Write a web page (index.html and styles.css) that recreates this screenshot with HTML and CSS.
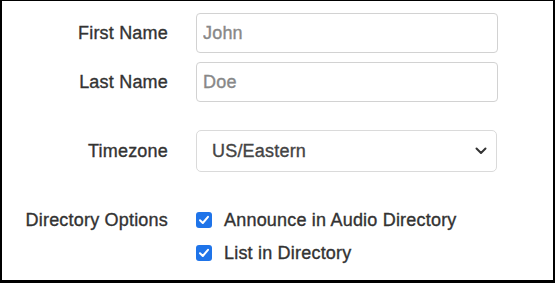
FILE: index.html
```html
<!DOCTYPE html>
<html lang="en">
<head>
    <meta charset="UTF-8">
    <meta name="viewport" content="width=device-width, initial-scale=1.0">
    <title>Profile</title>
    <link rel="stylesheet" href="styles.css">
</head>
<body>
    <form class="panel">
        <div class="row">
            <label class="label" for="first">First Name</label>
            <input class="field" id="first" type="text" placeholder="John">
        </div>
        <div class="row">
            <label class="label" for="last">Last Name</label>
            <input class="field" id="last" type="text" placeholder="Doe">
        </div>
        <div class="row row-tz">
            <span class="label">Timezone</span>
            <div class="select">
                <span>US/Eastern</span>
                <svg width="12" height="8" viewBox="0 0 12 8"><path d="M1.5 1.5 L6 6 L10.5 1.5" fill="none" stroke="#333" stroke-width="2" stroke-linecap="round" stroke-linejoin="round"/></svg>
            </div>
        </div>
        <div class="row row-dir">
            <span class="label">Directory Options</span>
            <div class="options">
                <label class="option">
                    <span class="check"><svg width="12" height="12" viewBox="0 0 12 12"><path d="M2 6.3 L4.8 9 L10 2.8" fill="none" stroke="#fff" stroke-width="2" stroke-linecap="round" stroke-linejoin="round"/></svg></span>
                    Announce in Audio Directory
                </label>
                <label class="option">
                    <span class="check"><svg width="12" height="12" viewBox="0 0 12 12"><path d="M2 6.3 L4.8 9 L10 2.8" fill="none" stroke="#fff" stroke-width="2" stroke-linecap="round" stroke-linejoin="round"/></svg></span>
                    List in Directory
                </label>
            </div>
        </div>
    </form>
</body>
</html>
```

FILE: styles.css
```css
*{
    box-sizing: border-box;
}

body{
    margin: 0;
    background: #fff;
    font-family: 'Liberation Sans', Arial, sans-serif;
    font-size: 18px;
    letter-spacing: 0.2px;
    color: #333;
    -webkit-text-stroke: 0.35px currentColor;
}

.panel{
    width: 555px;
    height: 283px;
    border-style: solid;
    border-color: #000;
    border-width: 1px 2px 3px 2px;
    padding-top: 12px;
    display: flex;
    flex-direction: column;
}

.row{
    display: flex;
    align-items: center;
    gap: 28px;
    margin-bottom: 9px;
}

.label{
    width: 166px;
    text-align: right;
    flex-shrink: 0;
}

.field{
    width: 302px;
    height: 40px;
    border: 1px solid #d2d2d2;
    border-radius: 4px;
    padding: 0 6px;
    font: inherit;
    letter-spacing: 0.2px;
    color: #333;
    -webkit-text-stroke: 0.35px #888;
}

.field::placeholder{
    color: #888;
}

.row-tz{
    margin-top: 19px;
}

.select{
    width: 301px;
    height: 42px;
    border: 1px solid #dadada;
    border-radius: 5px;
    padding: 0 9px 0 15px;
    display: flex;
    align-items: center;
    justify-content: space-between;
    color: #444;
}

.row-dir{
    margin-top: 27px;
    align-items: flex-start;
}

.row-dir .label{
    line-height: 24px;
}

.options{
    display: flex;
    flex-direction: column;
    gap: 9px;
}

.option{
    display: flex;
    align-items: center;
    gap: 12px;
    height: 24px;
}

.check{
    width: 16px;
    height: 16px;
    border-radius: 3px;
    background: #1f74e9;
    display: flex;
    align-items: center;
    justify-content: center;
}
```
